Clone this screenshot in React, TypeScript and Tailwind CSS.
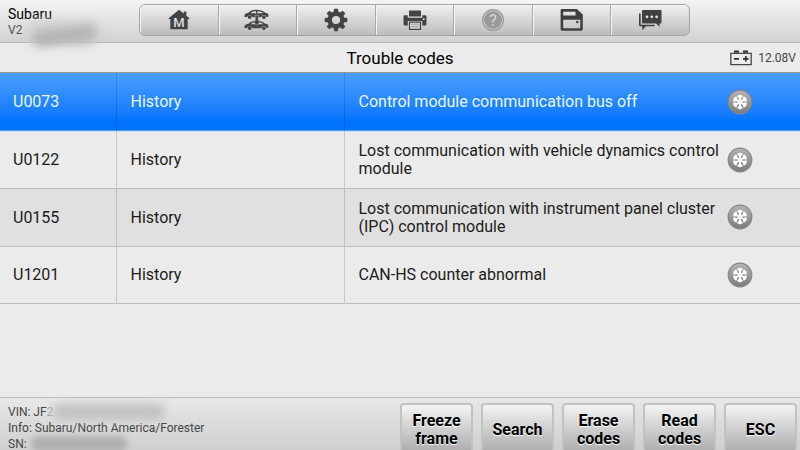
import type { ReactNode } from "react";

type TroubleCode = {
  code: string;
  status: string;
  description: string;
};

const troubleCodes: TroubleCode[] = [
  {
    code: "U0073",
    status: "History",
    description: "Control module communication bus off",
  },
  {
    code: "U0122",
    status: "History",
    description: "Lost communication with vehicle dynamics control module",
  },
  {
    code: "U0155",
    status: "History",
    description:
      "Lost communication with instrument panel cluster (IPC) control module",
  },
  {
    code: "U1201",
    status: "History",
    description: "CAN-HS counter abnormal",
  },
];

const actions = ["Freeze frame", "Search", "Erase codes", "Read codes", "ESC"];

function HomeIcon() {
  return (
    <svg width="24" height="24" viewBox="0 0 24 24" fill="#444">
      <path d="M12 1.800 1.600 10.200v.8h1.700v10.200h17.400V11h1.700v-.8l-3-2.400V3.600h-2.600v2Z" />
      <text
        x="12"
        y="19"
        textAnchor="middle"
        fontSize="13"
        fontWeight="500"
        fontFamily="Roboto, sans-serif"
        fill="#dedede"
      >
        M
      </text>
    </svg>
  );
}

function CarShape() {
  return (
    <>
      <path
        fillRule="evenodd"
        d="M.4 6.600c0-1.800 1.200-2.700 3.800-3C6.400 1.300 8.600.3 12 .3c4.200 0 6.400.8 9.200 2.900 2.100.2 3.200 1 3.200 2.500v1.600l-1.800.3a2.800 2.800 0 0 0-5.400.1H8.400a2.800 2.800 0 0 0-5.400 0L.4 7.300ZM6.600 3.700H12V1.700c-2.400 0-3.900.6-5.400 2Zm6.700 0h6c-1.600-1.400-3.400-1.900-6-2Z"
      />
      <circle cx="5.700" cy="7.600" r="1.900" />
      <circle cx="19.900" cy="7.600" r="1.900" />
    </>
  );
}

function VehicleSwapIcon() {
  return (
    <svg width="26" height="24" viewBox="0 0 26 24" fill="#444">
      <g transform="translate(0 1.500)">
        <CarShape />
      </g>
      <g transform="translate(0 12.500)">
        <CarShape />
      </g>
      <path
        d="M11.200 7v5.800H8.300l4.500 4.600 4.500-4.600h-2.900V7Z"
        stroke="#d4d4d4"
        strokeWidth="0.5"
      />
    </svg>
  );
}

function GearIcon() {
  const teeth = [0, 45, 90, 135, 180, 225, 270, 315];

  return (
    <svg width="24" height="24" viewBox="0 0 24 24">
      <circle cx="12" cy="12" r="6.300" fill="none" stroke="#444" strokeWidth="4.400" />
      {teeth.map((angle) => (
        <path
          key={angle}
          d="M9.400 4.600 10.100.7h3.800l.7 3.900Z"
          fill="#444"
          transform={`rotate(${angle} 12 12)`}
        />
      ))}
    </svg>
  );
}

function PrinterIcon() {
  return (
    <svg width="24" height="24" viewBox="0 0 24 24" fill="#444">
      <path d="M6 2.500h12v6H6Z" />
      <path
        fillRule="evenodd"
        d="M1.700 7.200h3v2.500h14.600V7.200h3a1.200 1.200 0 0 1 1.200 1.200v7.800a1.200 1.200 0 0 1-1.200 1.200h-3.100v-4.500H4.800v4.500H1.700a1.200 1.200 0 0 1-1.200-1.200V8.400a1.200 1.200 0 0 1 1.200-1.200Zm18.100 3.100v1.600h1.800v-1.600Z"
      />
      <path
        d="M6.500 14.200h11v7.200h-11Z"
        fill="#d8d8d8"
        stroke="#444"
        strokeWidth="1.200"
      />
      <path d="M8.300 16.200h7.400M8.300 18.600h7.400" stroke="#999" strokeWidth="1" />
    </svg>
  );
}

function HelpIcon() {
  return (
    <svg width="24" height="24" viewBox="0 0 24 24">
      <circle cx="12" cy="12" r="10.400" fill="#d0d0d0" stroke="#999" strokeWidth="1.200" />
      <circle cx="12" cy="12" r="9" fill="#9a9a9a" />
      <text
        x="12"
        y="17.500"
        textAnchor="middle"
        fontSize="16"
        fontFamily="Roboto, sans-serif"
        fill="#d6d6d6"
      >
        ?
      </text>
    </svg>
  );
}

function SaveIcon() {
  return (
    <svg width="24" height="24" viewBox="0 0 24 24" fill="#404040">
      <path
        fillRule="evenodd"
        d="M2 1h14.800l6 5.500v14.800a1.400 1.400 0 0 1-1.400 1.400H2A1.400 1.400 0 0 1 .6 21.300V2.400A1.400 1.400 0 0 1 2 1Zm1.200 2.800v3.700h12.300V3.800ZM3.200 11.700v8.500h17v-8.500Z"
      />
      <circle cx="17.300" cy="14" r="1.300" />
    </svg>
  );
}

function ChatIcon() {
  return (
    <svg width="24" height="24" viewBox="0 0 24 24" fill="#404040">
      <path d="M1 5.500h1.700v11.200h14v1.600H7.900l-3.600 3.900v-3.900H2.200A1.200 1.200 0 0 1 1 17.100Z" />
      <path d="M5 2h17.500a1 1 0 0 1 1 1v11.500a1 1 0 0 1-1 1h-.9v3.300l-3.600-3.300H5a1 1 0 0 1-1-1V3a1 1 0 0 1 1-1Z" />
      <circle cx="9" cy="8.800" r="1.400" fill="#e2e2e2" />
      <circle cx="13.800" cy="8.800" r="1.400" fill="#e2e2e2" />
      <circle cx="18.600" cy="8.800" r="1.400" fill="#e2e2e2" />
    </svg>
  );
}

function BatteryIcon() {
  return (
    <svg width="22" height="16" viewBox="0 0 22 16">
      <path d="M4 .5h5v2.300H4ZM13 .5h5v2.300h-5Z" fill="#333" />
      <path
        d="M.8 3.300h20.400v11.400H.8Z"
        fill="none"
        stroke="#484848"
        strokeWidth="1.300"
      />
      <path d="M4 8.800h5M13 8.800h5.600M15.800 6v5.600" stroke="#333" strokeWidth="1.700" />
    </svg>
  );
}

function SnowflakeIcon() {
  return (
    <svg width="26" height="26" viewBox="0 0 26 26">
      <defs>
        <linearGradient id="snowDisc" x1="0" y1="0" x2="0" y2="1">
          <stop offset="0" stopColor="#b4b4b4" />
          <stop offset="1" stopColor="#7c7c7c" />
        </linearGradient>
      </defs>
      <circle cx="13" cy="13" r="11.800" fill="url(#snowDisc)" stroke="#858585" strokeWidth="1.200" />
      {[0, 60, 120, 180, 240, 300].map((angle) => (
        <path
          key={angle}
          d="M13 12.500V5.800M10.700 6.600 13 9l2.300-2.400"
          fill="none"
          stroke="#fff"
          strokeWidth="1.900"
          transform={`rotate(${angle} 13 13)`}
        />
      ))}
    </svg>
  );
}

const tools: { label: string; icon: ReactNode; disabled?: boolean }[] = [
  { label: "Home", icon: <HomeIcon /> },
  { label: "Vehicle swap", icon: <VehicleSwapIcon /> },
  { label: "Settings", icon: <GearIcon /> },
  { label: "Print", icon: <PrinterIcon /> },
  { label: "Help", icon: <HelpIcon />, disabled: true },
  { label: "Save", icon: <SaveIcon /> },
  { label: "Feedback", icon: <ChatIcon /> },
];

export default function App() {
  return (
    <div className="flex min-h-screen flex-col overflow-hidden bg-[#ebebeb] font-[Roboto,sans-serif] text-[#1c1c1c]">
      <header className="flex h-[43px] items-start border-b border-[#b5b5b5] bg-linear-to-b from-[#f4f4f4] to-[#d2d2d2]">
        <div className="relative w-[139px] shrink-0 pt-1.5 pl-2">
          <div className="text-sm leading-4 text-black">Subaru</div>
          <div className="text-xs leading-4 text-[#555]">V2</div>
          <div className="absolute top-5 left-7 h-6 w-18 rounded-full bg-[#d4d4d4] blur-[4px]" />
          <div className="absolute top-7 left-8 h-4 w-16 -rotate-6 rounded-full bg-[#b4b4b4] blur-[5px]" />
        </div>
        <nav className="mt-1 mr-[110px] flex h-8 flex-1 divide-x divide-[#a8a8a8] overflow-hidden rounded-md border border-[#a3a3a3] bg-linear-to-b from-[#f0f0f0] to-[#bdbdbd]">
          {tools.map((tool) => (
            <button
              key={tool.label}
              type="button"
              aria-label={tool.label}
              disabled={tool.disabled}
              className="flex flex-1 items-center justify-center shadow-[inset_1px_1px_0_#f6f6f6]"
            >
              {tool.icon}
            </button>
          ))}
        </nav>
      </header>

      <main className="flex-1">
        <div className="grid h-[30px] grid-cols-[1fr_auto_1fr] items-center border-b border-[#999]">
          <h1 className="col-start-2 text-[17px] leading-5 text-black">
            Trouble codes
          </h1>
          <div className="flex items-center justify-end gap-1.5 pr-1 text-xs text-[#444]">
            <BatteryIcon />
            12.08V
          </div>
        </div>

        <table className="w-full table-fixed text-left text-base leading-[18px]">
          <colgroup>
            <col className="w-[116px]" />
            <col className="w-[228px]" />
            <col />
            <col className="w-[78px]" />
          </colgroup>
          <tbody>
            {troubleCodes.map((item, index) => (
              <tr
                key={item.code}
                className={
                  index === 0
                    ? "h-[58px] border-b border-[#c4dcf5] bg-linear-to-b from-[#4a9eff] to-[#0073fd] to-85% text-[#e6f6ff]"
                    : index % 2 === 0
                      ? "h-[58px] border-b border-[#bcbcbc] bg-[#e0e0e0]"
                      : "h-[57px] border-b border-[#bcbcbc]"
                }
              >
                <td className="border-r border-black/15 pt-px pl-[13px]">
                  {item.code}
                </td>
                <td className="border-r border-black/15 pt-px pl-3.5">
                  {item.status}
                </td>
                <td className="pt-px pl-3.5">{item.description}</td>
                <td className="pl-[5px]">
                  <button
                    type="button"
                    aria-label={`Freeze frame ${item.code}`}
                    className="block"
                  >
                    <SnowflakeIcon />
                  </button>
                </td>
              </tr>
            ))}
          </tbody>
        </table>
      </main>

      <footer className="flex h-[53px] items-start justify-between overflow-hidden border-t border-[#bdbdbd] bg-linear-to-b from-[#e8e8e8] to-[#cfcfcf]">
        <div className="pt-1.5 pl-2 text-xs leading-4 text-[#444]">
          <div className="flex">
            VIN: JF
            <span className="text-[#aaa]">2</span>
            <span className="h-4 w-28 rounded-full bg-[#c2c2c2] blur-[4px]" />
          </div>
          <div>Info: Subaru/North America/Forester</div>
          <div className="flex">
            SN:
            <span className="ml-1 h-4 w-24 rounded-full bg-[#b0b0b0] blur-[3px]" />
          </div>
        </div>
        <div className="flex gap-2 pt-[5px] pr-[3px]">
          {actions.map((label) => (
            <button
              key={label}
              type="button"
              className="h-[54px] w-[73px] rounded border-2 border-[#c2c2c2] bg-linear-to-b from-[#f4f4f4] to-[#a8a8a8] px-2 text-base leading-[18px] font-bold text-black [text-shadow:0_1px_1px_#fff]"
            >
              {label}
            </button>
          ))}
        </div>
      </footer>
    </div>
  );
}
